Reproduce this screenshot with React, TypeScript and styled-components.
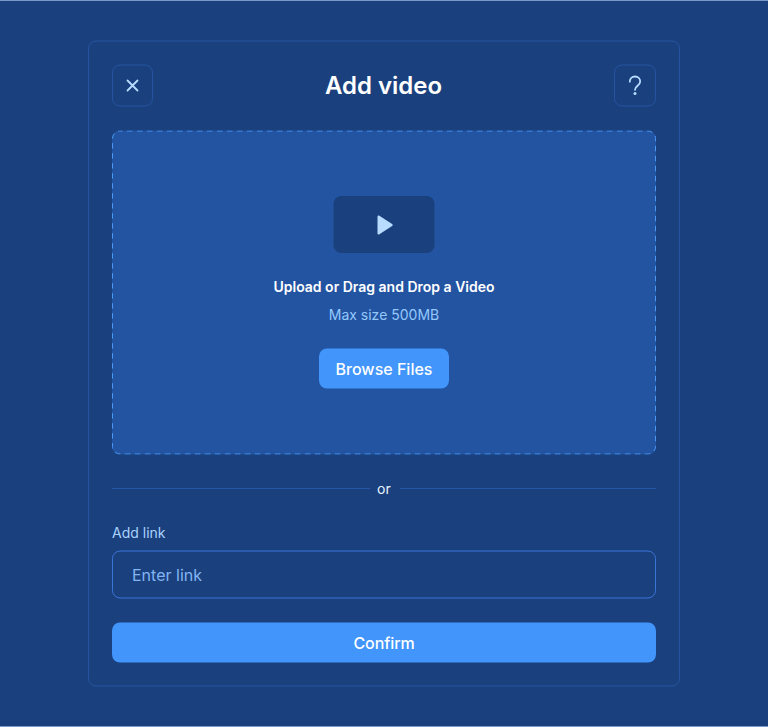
import React, { useState } from "react";
import styled, { createGlobalStyle } from "styled-components";

const GlobalStyle = createGlobalStyle`
  *, *::before, *::after { box-sizing: border-box; }
  body {
    margin: 0;
    background: #1a407d;
    font-family: Inter, "Liberation Sans", sans-serif;
  }
`;

const Page = styled.main`
  height: 727px;
  padding-top: 39px;
  display: flex;
  justify-content: center;
  align-items: flex-start;
  background: #1a407d;
  border-top: 1px solid #7c9ac9;
  border-bottom: 1px solid #7c9ac9;
`;

const Dialog = styled.section`
  width: 592px;
  height: 646px;
  padding: 23px;
  display: flex;
  flex-direction: column;
  border: 1px solid #2555a2;
  border-radius: 8px;
  transform: translateY(0.5px);
`;

const Header = styled.header`
  display: flex;
  align-items: center;
  justify-content: space-between;
  height: 42px;
`;

const Title = styled.h1`
  margin: 1px 0 0;
  color: #fff;
  font-size: 24px;
  line-height: 32px;
  font-weight: 600;
  transform: translateY(-0.5px);
`;

const IconButton = styled.button<{ $width: number }>`
  width: ${(p) => p.$width}px;
  height: 42px;
  padding: 0;
  display: grid;
  place-items: center;
  background: transparent;
  border: 1px solid #2555a2;
  border-radius: 8px;
  color: #b8dcff;
`;

const DropZone = styled.div`
  position: relative;
  height: 324px;
  margin-top: 24px;
  padding-top: 66px;
  display: flex;
  flex-direction: column;
  align-items: center;
  background: #2354a2;
  border-radius: 8px;
`;

const DashedOutline = styled.svg`
  position: absolute;
  inset: 0;
  width: 100%;
  height: 100%;
  pointer-events: none;
`;

const Preview = styled.div`
  width: 101px;
  height: 57px;
  display: grid;
  place-items: center;
  background: #1a407d;
  border-radius: 8px;
  transform: translate(-0.5px, -0.5px);
`;

const DropTitle = styled.div`
  margin-top: 23px;
  color: #fff;
  font-size: 14px;
  line-height: 20px;
  font-weight: 600;
`;

const DropHint = styled.div`
  margin-top: 8px;
  color: #93c8fb;
  font-size: 14px;
  line-height: 20px;
`;

const PrimaryButton = styled.button<{ $wide?: boolean }>`
  width: ${(p) => (p.$wide ? "100%" : "130px")};
  height: 40px;
  flex: none;
  margin-top: 24px;
  padding: 0;
  border: 0;
  border-radius: 8px;
  background: #4195fb;
  color: #fff;
  font: 500 16px/24px Inter, "Liberation Sans", sans-serif;
  letter-spacing: ${(p) => (p.$wide ? "-0.08px" : "0")};
`;

const Divider = styled.div`
  margin-top: 24px;
  display: flex;
  align-items: center;
  height: 20px;
  color: #eaf4ff;
  font-size: 14px;
  line-height: 20px;

  &::before,
  &::after {
    content: "";
    flex: none;
    width: 256px;
    height: 1px;
    margin-left: auto;
    background: #2657a6;
    transform: translateY(-0.5px);
  }

  &::before {
    width: 258px;
    margin: 0 7px 0 0;
  }
`;

const Label = styled.label`
  margin-top: 24px;
  color: #a9d3fd;
  font-size: 14px;
  line-height: 20px;
`;

const LinkInput = styled.input`
  height: 48px;
  flex: none;
  margin-top: 8px;
  padding: 0 19px;
  border: 1px solid #3a75d6;
  border-radius: 8px;
  outline: none;
  background: transparent;
  color: #fff;
  font: 400 16px/24px Inter, "Liberation Sans", sans-serif;

  &::placeholder {
    color: #82b5f3;
    opacity: 1;
  }
`;

export default function App() {
  const [link, setLink] = useState("");
  return (
    <>
      <GlobalStyle />
      <Page>
        <Dialog aria-label="Add video">
          <Header>
            <IconButton $width={41} aria-label="Close">
              <svg width="24" height="24" viewBox="0 0 24 24" fill="none" stroke="currentColor" strokeWidth="1.8" strokeLinecap="round">
                <path d="M6.500 7l10 10M16.500 7L6.500 17" />
              </svg>
            </IconButton>
            <Title>Add video</Title>
            <IconButton $width={42} aria-label="Help">
              <svg width="24" height="24" viewBox="0 0 24 24" fill="none" stroke="currentColor" strokeWidth="1.8" strokeLinecap="round">
                <path d="M6.800 8.200C6.800 5 9.100 3 12 3s5.200 2.100 5.200 5c0 4-5.200 4.400-5.200 8.300" />
                <circle cx="12" cy="20" r="1.500" fill="currentColor" stroke="none" />
              </svg>
            </IconButton>
          </Header>

          <DropZone>
            <DashedOutline viewBox="0 0 544 324" aria-hidden="true">
              <rect x="0.5" y="0.5" width="543" height="323" rx="7.5" fill="none" stroke="#4b99f5" strokeDasharray="5.5 4.5" strokeDashoffset="3" />
            </DashedOutline>
            <Preview>
              <svg width="24" height="24" viewBox="0 0 24 24" fill="#b8dcff">
                <path d="M6 3.800c0-1 1-1.600 1.900-1.100l12.700 8.200c.8.500.8 1.700 0 2.200L7.900 21.300C7 21.800 6 21.200 6 20.200z" />
              </svg>
            </Preview>
            <DropTitle>Upload or Drag and Drop a Video</DropTitle>
            <DropHint>Max size 500MB</DropHint>
            <PrimaryButton>Browse Files</PrimaryButton>
          </DropZone>

          <Divider>or</Divider>
          <Label htmlFor="link">Add link</Label>
          <LinkInput id="link" placeholder="Enter link" value={link} onChange={(e) => setLink(e.target.value)} />
          <PrimaryButton $wide>Confirm</PrimaryButton>
        </Dialog>
      </Page>
    </>
  );
}
